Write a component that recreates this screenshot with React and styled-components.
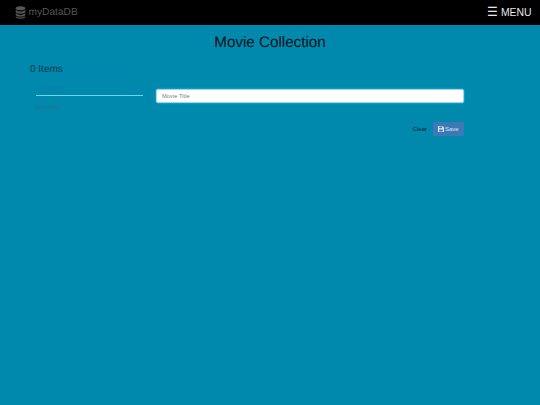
import React from "react";
import styled, { createGlobalStyle } from "styled-components";

const GlobalStyle = createGlobalStyle`
  html, body {
    margin: 0;
    padding: 0;
    height: 100%;
    background-color: #0088ad;
    font-family: "Liberation Sans", Arial, sans-serif;
    text-rendering: geometricPrecision;
  }
  * {
    box-sizing: border-box;
  }
`;

const Page = styled.div`
  width: 540px;
  height: 405px;
  overflow: hidden;
  background-color: #0088ad;
`;

const Navbar = styled.header`
  display: flex;
  align-items: center;
  justify-content: space-between;
  height: 25px;
  padding: 0 8.5px 1px 15px;
  background-color: #000;
`;

const Brand = styled.a`
  display: flex;
  align-items: center;
  gap: 2.5px;
  font-size: 10.2px;
  color: #555;
`;

const Menu = styled.button`
  display: flex;
  align-items: center;
  gap: 3px;
  padding: 0;
  border: none;
  background: transparent;
  font-family: inherit;
  font-size: 10.4px;
  color: #e6e6e6;
`;

const MenuGlyph = styled.span`
  font-size: 12px;
  line-height: 12px;
`;

const Title = styled.h1`
  margin: 9px 0 0;
  font-size: 15.2px;
  line-height: 18px;
  font-weight: 400;
  text-align: center;
  color: #00131a;
`;

const Count = styled.h2`
  margin: 11px 0 0 30px;
  font-size: 10px;
  line-height: 14px;
  font-weight: 400;
  color: #00384a;
`;

const FormRow = styled.div`
  display: flex;
  align-items: flex-start;
  gap: 13px;
  margin: 7px 0 0 36px;
  width: 428px;
`;

const ImageColumn = styled.div`
  display: flex;
  flex-direction: column;
  flex: 0 0 107px;
`;

const CategoryText = styled.span`
  height: 10px;
  font-size: 5px;
  line-height: 10px;
  margin-left: 2px;
  color: #1a78a8;
`;

const Rule = styled.div`
  height: 1px;
  margin-top: 1px;
  background-color: #6fd3ea;
`;

const Hint = styled.span`
  margin-top: 9px;
  font-size: 5px;
  line-height: 6px;
  color: #33708a;
`;

const TitleInput = styled.input`
  flex: 1;
  height: 14px;
  margin-top: 5px;
  padding: 0 5px;
  border: 1px solid #8fdcf0;
  border-radius: 2px;
  background-color: #fff;
  box-shadow: 0 0 2px rgba(102, 217, 239, 0.8);
  font-family: inherit;
  font-size: 5.8px;
  caret-color: #555;
  outline: none;

  &::placeholder {
    color: #808080;
    opacity: 1;
  }
`;

const Actions = styled.div`
  display: flex;
  align-items: center;
  justify-content: flex-end;
  gap: 6px;
  width: 464px;
  margin-top: 11px;
`;

const ClearButton = styled.button`
  padding: 0;
  border: none;
  background: transparent;
  font-family: inherit;
  font-size: 6px;
  color: #00212c;
`;

const SaveButton = styled.button`
  display: flex;
  align-items: center;
  gap: 1px;
  width: 31px;
  height: 14px;
  padding: 0 0 0 5px;
  border: none;
  border-radius: 1px;
  background-color: #3d79b4;
  font-family: inherit;
  font-size: 6px;
  color: #dce8f2;
`;

const DatabaseIcon = () => (
  <svg width="11" height="13" viewBox="0 0 11 13" fill="#555">
    <ellipse cx="5.5" cy="2.2" rx="4.8" ry="2" />
    <path d="M.7 3.7c.8 1.2 2.7 1.8 4.8 1.8s4-.6 4.8-1.8v2.1c0 1.1-2.1 2-4.8 2s-4.8-.9-4.8-2z" />
    <path d="M.7 7.1c.8 1.2 2.7 1.8 4.8 1.8s4-.6 4.8-1.8v1.7c0 1.1-2.1 2-4.8 2s-4.8-.9-4.8-2z" />
    <path d="M.7 9.9c.8 1.1 2.7 1.7 4.8 1.7s4-.6 4.8-1.7v.9c0 1.1-2.1 2-4.8 2s-4.8-.9-4.8-2z" />
  </svg>
);

const FloppyIcon = () => (
  <svg width="6" height="6" viewBox="0 0 6 6" fill="#dce8f2">
    <path d="M0 0h4.6L6 1.4V6H0zM1.2.6v1.6h3V.6zM1.2 3.4V5.4h3.6v-2z" fillRule="evenodd" />
  </svg>
);

const App = () => {
  return (
    <Page>
      <GlobalStyle />
      <Navbar>
        <Brand>
          <DatabaseIcon />
          myDataDB
        </Brand>
        <Menu>
          <MenuGlyph>☰</MenuGlyph>
          MENU
        </Menu>
      </Navbar>
      <Title>Movie Collection</Title>
      <Count>0 Items</Count>
      <FormRow>
        <ImageColumn>
          <CategoryText>[Category]</CategoryText>
          <Rule />
          <Hint>No movies</Hint>
        </ImageColumn>
        <TitleInput placeholder="Movie Title" autoFocus />
      </FormRow>
      <Actions>
        <ClearButton>Clear</ClearButton>
        <SaveButton>
          <FloppyIcon />
          Save
        </SaveButton>
      </Actions>
    </Page>
  );
};

export default App;
